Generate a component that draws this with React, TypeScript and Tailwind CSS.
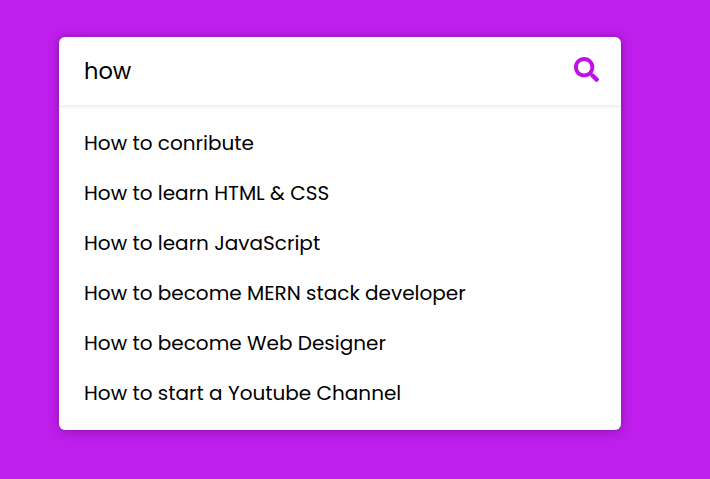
import { FaSearch } from "react-icons/fa";

const suggestions = [
  "How to conribute",
  "How to learn HTML & CSS",
  "How to learn JavaScript",
  "How to become MERN stack developer",
  "How to become Web Designer",
  "How to start a Youtube Channel",
];

export default function App() {
  return (
    <main className="h-[479px] w-[710px] overflow-hidden bg-[#c01eed] pt-[37px] pl-[59px] font-['Poppins',Inter,sans-serif] text-black">
      <div className="h-[393px] w-[562px] rounded-md bg-white shadow-[0_1px_12px_rgba(0,0,0,0.3)]">
        <div className="flex h-[68px] items-center justify-between rounded-t-md pr-[21.6px] pl-[25px] shadow-[0_1px_5px_rgba(0,0,0,0.1)]">
          <span className="pt-px text-[22.5px] leading-[33px]">how</span>
          <FaSearch className="mb-[3px] size-[25px] text-[#c20fe9]" />
        </div>
        <ul className="pt-[13px] pl-[25px] text-[20px] leading-[50px]">
          {suggestions.map((text) => (
            <li key={text} className="h-[50px] whitespace-nowrap">
              {text}
            </li>
          ))}
        </ul>
      </div>
    </main>
  );
}
